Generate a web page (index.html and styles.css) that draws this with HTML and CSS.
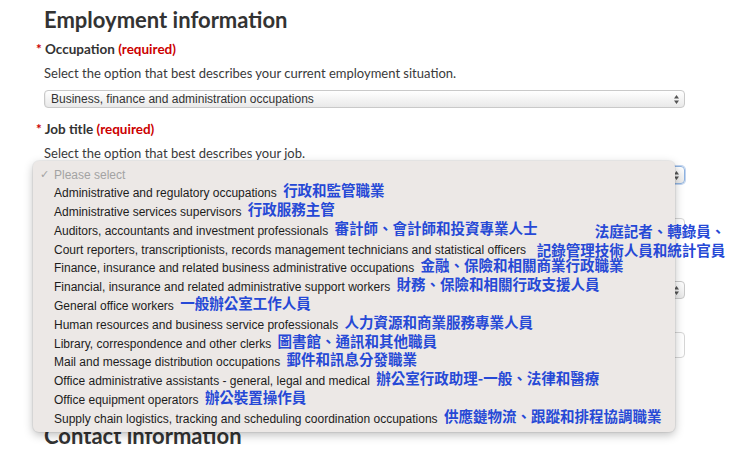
FILE: index.html
```html
<!DOCTYPE html>
<html lang="en">
<head>
<meta charset="utf-8">
<title>Employment information</title>
<link rel="stylesheet" href="styles.css">
</head>
<body>
<main class="page">
  <form class="form">
    <h1 class="section-title">Employment information</h1>

    <div class="field">
      <div class="label"><span class="star">*</span> Occupation <span class="req">(required)</span></div>
      <p class="desc">Select the option that best describes your current employment situation.</p>
      <div class="select">
        <span class="select-value">Business, finance and administration occupations</span>
        <svg class="arrows" width="5" height="9" viewBox="0 0 5 9" aria-hidden="true"><path d="M0 3.6L2.5 0L5 3.6Z M0 5.4L2.5 9L5 5.4Z"/></svg>
      </div>
    </div>

    <div class="field">
      <div class="label"><span class="star">*</span> Job title <span class="req">(required)</span></div>
      <p class="desc">Select the option that best describes your job.</p>
      <div class="select-wrap">
        <div class="select select-focus">
          <span class="select-value"></span>
          <svg class="arrows" width="5" height="9" viewBox="0 0 5 9" aria-hidden="true"><path d="M0 3.6L2.5 0L5 3.6Z M0 5.4L2.5 9L5 5.4Z"/></svg>
        </div>
        <ul class="menu">
          <li class="placeholder"><span class="check">✓</span>Please select</li>
          <li>Administrative and regulatory occupations <span class="tr">行政和監管職業</span></li>
          <li>Administrative services supervisors <span class="tr">行政服務主管</span></li>
          <li>Auditors, accountants and investment professionals <span class="tr">審計師、會計師和投資專業人士</span></li>
          <li>Court reporters, transcriptionists, records management technicians and statistical officers <span class="tr-anchor"><span class="tr tr-box">法庭記者、轉錄員、<br>記錄管理技術人員和統計官員</span></span></li>
          <li>Finance, insurance and related business administrative occupations <span class="tr">金融、保險和相關商業行政職業</span></li>
          <li>Financial, insurance and related administrative support workers <span class="tr">財務、保險和相關行政支援人員</span></li>
          <li>General office workers <span class="tr">一般辦公室工作人員</span></li>
          <li>Human resources and business service professionals <span class="tr">人力資源和商業服務專業人員</span></li>
          <li>Library, correspondence and other clerks <span class="tr">圖書館、通訊和其他職員</span></li>
          <li>Mail and message distribution occupations <span class="tr">郵件和訊息分發職業</span></li>
          <li>Office administrative assistants - general, legal and medical <span class="tr">辦公室行政助理-一般、法律和醫療</span></li>
          <li>Office equipment operators <span class="tr">辦公裝置操作員</span></li>
          <li>Supply chain logistics, tracking and scheduling coordination occupations <span class="tr">供應鏈物流、跟蹤和排程協調職業</span></li>
        </ul>
      </div>
    </div>

    <div class="input input-a"></div>
    <div class="select select-b">
      <span class="select-value"></span>
      <svg class="arrows" width="5" height="9" viewBox="0 0 5 9" aria-hidden="true"><path d="M0 3.6L2.5 0L5 3.6Z M0 5.4L2.5 9L5 5.4Z"/></svg>
    </div>
    <div class="input input-c"></div>

    <h2 class="section-title section-next">Contact information</h2>
  </form>
</main>
</body>
</html>
```

FILE: styles.css
```css
* { box-sizing: border-box; }

html, body {
  margin: 0;
  padding: 0;
  background: #ffffff;
}

body {
  width: 740px;
  height: 459px;
  overflow: hidden;
  font-family: Lato, "Noto Sans", sans-serif;
  color: #333333;
}

.form {
  position: relative;
  margin: 0;
  padding: 0 55px 0 44px;
}

.section-title {
  margin: 0;
  padding-top: 5px;
  font-size: 22px;
  font-weight: 700;
  line-height: 29px;
  color: #333333;
}

.field { margin-top: 5px; }
.field + .field { margin-top: 11px; }

.label {
  font-size: 13.5px;
  font-weight: 700;
  line-height: 20px;
  color: #333333;
}

.star {
  color: #cc0000;
  margin-left: -8px;
}

.req { color: #cc0000; }

.desc {
  margin: 4px 0 0;
  font-size: 13px;
  line-height: 20px;
  color: #3a3a3a;
}

.select {
  margin-top: 7px;
  height: 18px;
  display: flex;
  align-items: center;
  justify-content: space-between;
  padding: 0 5px 0 6px;
  border: 1px solid #c9c9c9;
  border-radius: 4px;
  background: linear-gradient(#ffffff, #e9e9e9);
  box-shadow: inset 1px 0 0 rgba(0,0,0,0.04);
  font-family: "Liberation Sans", Arial, sans-serif;
  font-size: 12px;
  color: #333333;
}

.arrows { fill: #555555; flex: none; }

.select-wrap {
  position: relative;
  margin-top: 3px;
}

.select-wrap .select { margin-top: 0; }

.select-focus {
  border-color: #8fb3e0;
  box-shadow: 0 0 0 1px rgba(120, 160, 220, 0.45);
}

.menu {
  position: absolute;
  top: -5px;
  left: -11px;
  z-index: 5;
  width: 642px;
  height: 271px;
  margin: 0;
  padding: 4.5px 0 0;
  list-style: none;
  background: #ece8e6;
  border-radius: 6px;
  box-shadow: 0 0 0 1px rgba(0,0,0,0.05), 0 3px 10px rgba(0,0,0,0.26);
  font-family: "Liberation Sans", Arial, sans-serif;
  font-size: 12px;
  color: #1c1c1c;
}

.menu li {
  position: relative;
  height: 18.8px;
  line-height: 18.8px;
  padding-left: 21px;
  white-space: nowrap;
}

.menu .placeholder { color: #a3a3a3; }

.check {
  position: absolute;
  left: 7px;
  top: 0;
  font-family: "DejaVu Sans", sans-serif;
  font-size: 11px;
  color: #a3a3a3;
}

.tr {
  margin-left: 3px;
  font-family: "Noto Sans CJK TC", "Noto Sans CJK SC", sans-serif;
  font-size: 14.5px;
  font-weight: 700;
  line-height: 12px;
  color: #2649d6;
  vertical-align: 1px;
}

.tr-anchor {
  position: relative;
  display: inline-block;
  width: 190px;
  height: 18.8px;
  margin-left: 6px;
  vertical-align: top;
}

.tr-box {
  position: absolute;
  right: 0;
  bottom: 0;
  margin-left: 0;
  line-height: 18.8px;
  text-align: right;
  white-space: nowrap;
}

.input {
  height: 20px;
  border: 1px solid #d6d6d6;
  border-radius: 4px;
  background: #ffffff;
}

.input-a { margin-top: 34px; }
.select-b { margin-top: 43px; }
.input-c { margin-top: 33px; height: 26px; }

.section-next { margin-top: 58px; }
```
